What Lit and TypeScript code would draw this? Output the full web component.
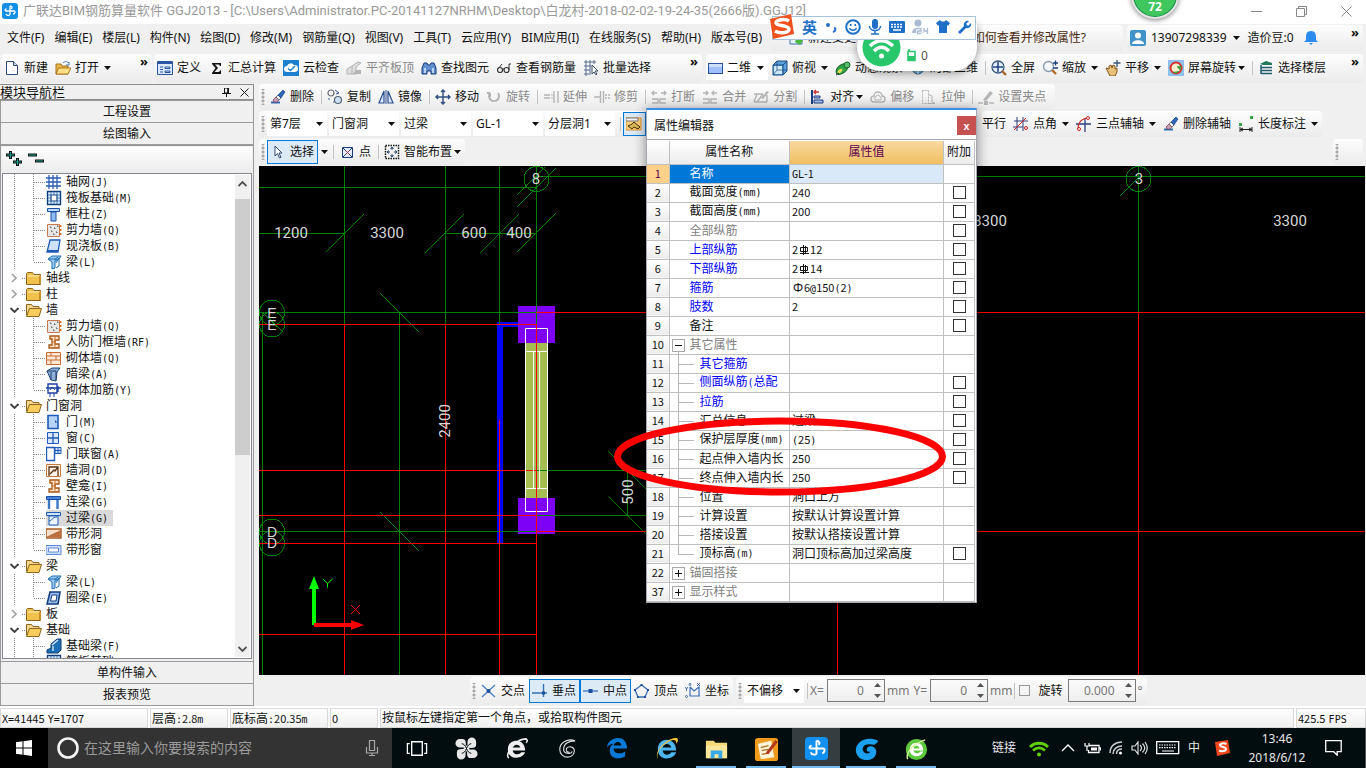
import { LitElement, html, css, svg, nothing } from "lit";
import { customElement } from "lit/decorators.js";
import { classMap } from "lit/directives/class-map.js";

const BLUE = "#1f4f99";
const GREY = "#b4b4b4";

const brush = svg`<path d="M1 13.5h9" stroke="#2f6fb0" stroke-width="2"/><path d="M3 11l3-3 3 3-2 2H4z" fill="#c9a0b8" stroke="#804060" stroke-width=".8"/><path d="M6 8l2-2 3 3-2 2z" fill="#eee" stroke="#555" stroke-width=".8"/><path d="M8 6l5-5 2 2-4 6z" fill="#2b66b8" stroke="#153d78" stroke-width=".6"/>`;
const beam = svg`<path d="M2 5l4-3h9l-2 3-4 2v7l-3 1V8z" fill="#9cc8ee" stroke="#1b6db5"/><path d="M3 5h8M8 6l4-3M10 9l3-5v8l-3 2" stroke="#1b6db5" fill="none"/>`;
const niche = svg`<path d="M4 2h9v4H9v4h4v4H3v-3h3V5H4z" fill="#ffe3c8" stroke="#a85510" stroke-width="1.3"/><path d="M9 2v12M6 8h4" stroke="#c87838"/>`;
const shear = svg`<path d="M1.500 2.500h12v12h-12z" fill="#e6e6e6" stroke="#c87850"/><path d="M4 5h1v1M8 6h1v1M5 9h1v1M10 10h1v1M7 12h1v1M11 4h1v1" stroke="#555" fill="none"/><path d="M14.500 3v11" stroke="#d87020" stroke-width="2" stroke-dasharray="2 2"/>`;

const ICONS: Record<string, unknown> = {
  file: svg`<path d="M2.500 1.500h7l4 4v9h-11z" fill="#fff" stroke="#2c4a78"/><path d="M9.500 1.500v4h4" fill="#cfdcf0" stroke="#2c4a78"/>`,
  open: svg`<path d="M1 4h5l1 2h6v8H1z" fill="#e8b84a" stroke="#a8741c"/><path d="M3.500 8H16l-3 6H1z" fill="#ffdf86" stroke="#a8741c"/><path d="M8 3c2-2 4-2 5 0l1-1v3h-3" fill="none" stroke="#4a78b0"/>`,
  define: svg`<path d="M.5 1.500h15v13H.5z" fill="#dce8fb" stroke="#2a55a5"/><path d="M.5 3h15" stroke="#2a55a5" stroke-width="2"/><path d="M3 7h3M3 9.500h3M3 12h3M8 7h5v1.500H8zM8 11h5v1.500H8z" stroke="#2a55a5" fill="none"/>`,
  sigma: svg`<path d="M4 3h9v3h-1l-1-1.500H7L10 8l-3.500 4H11l1-1.500h1V14H4v-1l3.500-5L4 4z" fill="#111"/>`,
  cloud: svg`<rect width="16" height="16" fill="#1d7fd0"/><path d="M4 12a3 3 0 010-6 4 4 0 017-1 3.500 3.500 0 011 7z" fill="#fff"/><path d="M5 8.500l2.500 2L12 6" fill="none" stroke="#1d7fd0" stroke-width="1.500"/>`,
  slab: svg`<path d="M1 9l5-3v8H1zM6 6l6-4 3 1-5 4v7H6" fill="#ddd" stroke="${GREY}"/><path d="M10 10h5v4H7z" fill="${GREY}"/>`,
  find: svg`<path d="M1 8l2-5h3l1 2h2l1-2h3l2 5v6h-5v-3H6v3H1z" fill="#5f8fd0" stroke="#173a78"/><path d="M4 8v5M12 8v5" stroke="#dcebff" stroke-width="1.500"/>`,
  glasses: svg`<circle cx="4" cy="10" r="2.500" fill="none" stroke="#333" stroke-width="1.200"/><circle cx="10.500" cy="10" r="2.500" fill="none" stroke="#333" stroke-width="1.200"/><path d="M6 9h2M2 9l4-5M13 10V4h2" fill="none" stroke="#333"/>`,
  batch: svg`<path d="M1 2h12M1 6h7M1 10h6M1 14h7M3 0v16M7 0v13M11 0v4" stroke="#5a6f90"/><path d="M9 5v9l2-2 2 3 1-1-2-3h3z" fill="#fff" stroke="#3a4a66"/>`,
  plane: svg`<rect x=".5" y="3.500" width="14" height="10" fill="#9fc0fa" stroke="#2a4fa0"/><path d="M1 4h13v3H1z" fill="#cfe0ff"/>`,
  cube: svg`<path d="M1 5l4-4h10v10l-4 4H1z" fill="#5aa0dc" stroke="#1d4a80"/><path d="M1 5h10v10M11 5l4-4" fill="none" stroke="#1d4a80"/><path d="M2 6h8v8H2z" fill="#cfe8f8"/><path d="M5 1v9h10M5 10l-4 5" stroke="#1d4a80" stroke-width=".7" fill="none"/>`,
  orbit: svg`<ellipse cx="7" cy="9" rx="7" ry="4" transform="rotate(-40 7 9)" fill="#2fa64a" stroke="#14602a"/><ellipse cx="5" cy="11" rx="3" ry="1.500" transform="rotate(-40 5 11)" fill="#eadb50"/><circle cx="12" cy="5" r="3" fill="#59c06c" stroke="#14602a"/><path d="M1 15l3-2" stroke="#333"/>`,
  local: svg`<circle cx="8" cy="8" r="6" fill="#68a8d8" stroke="#245a88"/><path d="M2 8h12M8 2v12" stroke="#fff"/>`,
  full: svg`<circle cx="7" cy="7" r="6" fill="#e8f2ff" stroke="#38557c" stroke-width="1.300"/><path d="M7 2v10M2 7h10" stroke="#1f3f80" stroke-width="1.500"/><path d="M11 11l4 4" stroke="#a8652a" stroke-width="2.400"/>`,
  zoomio: svg`<circle cx="6.500" cy="6.500" r="5" fill="#f4f8fd" stroke="#8898ac" stroke-width="1.300"/><path d="M10 10l4 4" stroke="#b06c2a" stroke-width="2.400"/><path d="M11 3h5M13.500.5v5M11 8h5" stroke="#1f3f80" stroke-width="1.300"/>`,
  hand: svg`<path d="M1 8l3 1V6l2-1 1 3 1-3 2 1v3l2-1v4l-2 4H5z" fill="#e8c078" stroke="#80541c"/><path d="M12 0v7M8.500 3h7" stroke="#38557c" stroke-width="1.300"/>`,
  spin: svg`<rect width="16" height="16" fill="#8fc0ea"/><circle cx="8" cy="8" r="5.500" fill="#f6f0d0" stroke="#d83030" stroke-width="2"/><path d="M5 12a4 4 0 006-1M9 7l4-1-1 4" fill="#40a040" stroke="#40a040"/>`,
  floors: svg`<path d="M2 4l6-3 6 2v2H5z" fill="#1f7a5c"/><path d="M3 7.500h11M3 10.500h11M3 13.500h11M3 5v9" stroke="#1f5c6c" stroke-width="1.500"/>`,
  brush,
  copy: svg`<circle cx="4" cy="4" r="3" fill="none" stroke="#667" stroke-width="1.200"/><circle cx="11" cy="11" r="3.500" fill="#cfe0f2" stroke="#567" stroke-width="1.200"/><path d="M8 1l4 3-3 1M2 9v2M6 13h1" stroke="#2a55a5" fill="none"/>`,
  mirror: svg`<path d="M6 2v12H1zM10 2v12h5z" fill="#dce8fb" stroke="#2a4f90" stroke-width="1.200"/><path d="M8 1v14" stroke="#2a4f90"/>`,
  move: svg`<path d="M8 1v14M1 8h14M6 3l2-2 2 2M6 13l2 2 2-2M3 6L1 8l2 2M13 6l2 2-2 2" fill="none" stroke="#2f4f80" stroke-width="1.400"/>`,
  rotate: svg`<path d="M4 4a5 5 0 108 0M4 4v4M4 4H1" fill="none" stroke="${GREY}" stroke-width="2"/>`,
  extend: svg`<path d="M1 6h6M1 9h6M11 2v12M15 2v12" stroke="${GREY}" stroke-width="1.400"/><path d="M8 6h2M8 9h2" stroke="${GREY}"/>`,
  trim: svg`<path d="M0 8h6M6.500 2v12M9.500 2v12M11 6h2M14 6h2M11 9h2M14 9h2" stroke="${GREY}" stroke-width="1.400"/>`,
  breakit: svg`<path d="M1 4h5M10 4h5M3 2L1 4l2 2M13 2l2 2-2 2M1 10h6v4H1M15 10H9v4h6" fill="none" stroke="${GREY}" stroke-width="1.400"/>`,
  merge: svg`<path d="M1 4h5M10 4h5M4 2l2 2-2 2M12 2l-2 2 2 2M1 10h6v4H1M15 10H9v4h6" fill="none" stroke="${GREY}" stroke-width="1.400"/>`,
  split: svg`<path d="M1 5h9M1 13h13M10 5L4 13M4 5l-3 8M14 6v7" fill="none" stroke="${GREY}" stroke-width="1.400"/><path d="M8 9l6-7 2 1-6 7z" fill="${GREY}"/>`,
  align: svg`<path d="M2 1v14" stroke="#1c3f80" stroke-width="2"/><path d="M4 3h5M6 1L4 3l2 2" fill="none" stroke="#d03030" stroke-width="1.300"/><path d="M4 7h6v2H4zM4 11h9v3H4z" fill="#a8c4f0" stroke="#1c3f80"/>`,
  offset: svg`<path d="M4 13a3 3 0 010-6 4 4 0 018 0 3 3 0 010 6z" fill="none" stroke="${GREY}" stroke-width="1.400"/><path d="M6 11a1.500 1.500 0 010-3 2 2 0 014 0 1.500 1.500 0 010 3z" fill="none" stroke="${GREY}"/>`,
  stretch: svg`<path d="M1.500 1.500h6v13h-6z" fill="none" stroke="${GREY}" stroke-dasharray="2 1"/><path d="M7 5l4 2v6l3 1.500H7" fill="none" stroke="${GREY}"/>`,
  grip: svg`<path d="M5 11l7-9 3 2-7 8z" fill="${GREY}"/><path d="M0 14h5M11 14h5" stroke="${GREY}" stroke-width="1.500"/><path d="M6 12h4v4H6z" fill="${GREY}"/>`,
  cursor: svg`<path d="M5 2v10l2.500-2.500 2 4.500 1.500-.7-2-4.300H12z" fill="#fff" stroke="#334a70"/>`,
  point: svg`<path d="M3.500 3.500h10v10h-10z" fill="#e4ecf8" stroke="#1f3a78"/><path d="M4 4l9 9M13 4l-9 9" stroke="#1f3a78"/><path d="M6.500 6.500l4 4M10.500 6.500l-4 4" stroke="#a03050"/>`,
  smart: svg`<path d="M1.500 1.500h13v13h-13z" fill="none" stroke="#111" stroke-width="1.500" stroke-dasharray="1.500 1"/><path d="M8 3v3M8 10v3M3 8h3M10 8h3M6.500 5L8 3l1.500 2M6.500 11L8 13l1.500-2M5 6.500L3 8l2 1.500M11 6.500L13 8l-2 1.500" stroke="#1f3f80" fill="none"/>`,
  prop: svg`<path d="M0 2h15v12H0z" fill="#ffd27a" stroke="#e09030"/><path d="M0 2h12v3H0z" fill="#f6f6f6" stroke="#777"/><path d="M2 10l4-2 2-2 6 5-2 2-4-2-2 2z" fill="#d8b850" stroke="#4a3010"/>`,
  angle: svg`<path d="M1 5h14M4 1v14M10 1v14M0 11h10" stroke="#2a3f80"/><path d="M1 14l12-12" stroke="#d02020"/><circle cx="13" cy="12" r="1.500" fill="none" stroke="#d02020"/>`,
  axis3: svg`<path d="M0 8h15M9 3v13" stroke="#2a3f80" stroke-width="1.300"/><path d="M2 13C2 6 6 2 13 2" fill="none" stroke="#d02020" stroke-width="1.200"/><circle cx="3" cy="13" r="1.500" fill="#fff" stroke="#d02020"/><circle cx="12" cy="2" r="1.500" fill="#fff" stroke="#d02020"/>`,
  dim: svg`<path d="M1 7h3v3H1zM12 0h3v3h-3z" fill="#2fa64a"/><path d="M2 11v5M14 11v5M2 13.500h12M5 12l-3 1.500L5 15M11 12l3 1.500-3 1.500" stroke="#222" fill="none"/>`,
  cross: svg`<path d="M1 2l13 12M14 2L1 14" stroke="#4a80c0" stroke-width="1.300"/><circle cx="7.500" cy="8" r="2" fill="${BLUE}"/>`,
  perp: svg`<path d="M0 10h15M11.500 1v13" stroke="#3a70b8" stroke-width="1.400"/><path d="M10 8.500h3v3h-3z" fill="${BLUE}"/>`,
  mid: svg`<path d="M0 8h15" stroke="#3a70b8" stroke-width="1.300"/><path d="M5.500 6h4v4h-4z" fill="${BLUE}"/>`,
  penta: svg`<path d="M7.500 2L14 7l-3 7H4L1 7z" fill="none" stroke="#3a70b8" stroke-width="1.300"/><path d="M6.500 1h2v2h-2zM13 6h2v2h-2zM10 13h2v2h-2zM3 13h2v2H3zM0 6h2v2H0z" fill="${BLUE}"/>`,
  coord: svg`<path d="M5 4v9h10M5 4l4 4 5-4v9" fill="none" stroke="#3a70b8" stroke-width="1.200"/><path d="M0 4l1.500 2L3 4M1.500 6v2M12 0l3 3M15 0l-3 3" fill="none" stroke="${BLUE}" stroke-width=".8"/><circle cx="5" cy="1.500" r="1" fill="none" stroke="${BLUE}" stroke-width=".8"/><circle cx="1.500" cy="13.500" r="1" fill="none" stroke="${BLUE}" stroke-width=".8"/>`,
  user: svg`<rect width="16" height="16" rx="2" fill="#3f93c8"/><circle cx="8" cy="5.500" r="3" fill="#fff"/><path d="M2 14c0-5 12-5 12 0z" fill="#fff"/>`,
  bell: svg`<path d="M8 1c4 0 5 3 5 6v3l2 2H1l2-2V7c0-3 1-6 5-6z" fill="#2a8cf0"/><path d="M6 13h4l-2 2z" fill="#2a8cf0"/>`,
  neu: svg`<path d="M2 4h12v10H2z" fill="#e8f2ff" stroke="#3a70b8"/><path d="M9 6l6 4-3 5-5-3z" fill="#49b83c"/>`,
  folder: svg`<path d="M.5 3.500l1-1h5l1.500 2h6.500v10H.5z" fill="#f2c14c" stroke="#8a6420"/><path d="M1.500 6h12" stroke="#fff0b8"/><path d="M13 6v8h2V5z" fill="#c88f2a"/>`,
  folderOpen: svg`<path d="M.5 13V2.500h5l1.500 2h6V7" fill="#f6d98a" stroke="#8a6420"/><path d="M3.500 6.500H15.500l-2.500 8H.5z" fill="#f8cd5c" stroke="#8a6420"/>`,
  grid: svg`<path d="M0 4h13M0 8h13M0 12h13M3 1v14M7 1v14M11 1v14" stroke="#2c5cb0" stroke-width="1.300"/><circle cx="14" cy="4" r="1" fill="#2c5cb0"/><circle cx="14" cy="8" r="1" fill="#2c5cb0"/><circle cx="14" cy="12" r="1" fill="#2c5cb0"/>`,
  raft: svg`<path d="M1.500 1.500h13v13h-13z" fill="#e4f0fc" stroke="#123f7c" stroke-width="1.400"/><path d="M5 5h6v6H5z" fill="#fff" stroke="#123f7c" stroke-width="1.200"/><path d="M2 5h3M2 8h3M2 11h3M11 5h3M11 8h3M11 11h3M5 2v3M8 2v3M11 2v3M5 11v3M8 11v3M11 11v3" stroke="#3f78b8"/>`,
  column: svg`<path d="M1.500 2.500h12v3h-12z" fill="#bcd8fa" stroke="#1b4fa5"/><path d="M5 6h5v9H5z" fill="#8fbaf2" stroke="#1b4fa5"/>`,
  shear,
  plate: svg`<path d="M4 2h10l-2 12H1z" fill="#cfe2fb" stroke="#1f5ab8" stroke-width="1.300"/><path d="M2 13h10" stroke="#1f5ab8" stroke-width="2"/>`,
  beam,
  niche,
  brick: svg`<path d="M.5 2.500h14v12H.5z" fill="#ffe8d6" stroke="#c86a30"/><path d="M.5 6h14M.5 10h14M5 2v4M10 6v4M5 10v4" stroke="#c86a30"/>`,
  hidden: svg`<path d="M1 5l5-3h8l-3 4-1 9-5-1z" fill="#8fb0d8" stroke="#1c3f70"/><path d="M1 5h9v9M5 6v8" stroke="#1c3f70" fill="none"/>`,
  rebar: svg`<path d="M2 2h9v9H2zM0 6h15M12 4v6" fill="none" stroke="#1c3fa5" stroke-width="1.400"/><path d="M4 11v4M8 11v4M4 8l2-3 3 3" stroke="#1c3fa5" fill="none"/>`,
  door: svg`<path d="M2 1.500h10v13H2z" fill="#b9d4fa" stroke="#1f5ab8" stroke-width="1.600"/><path d="M9 7h1v2" stroke="#1f5ab8"/>`,
  window: svg`<path d="M1.500 2.500h11v11h-11z" fill="#dceafd" stroke="#1f5ab8"/><path d="M7 2v12M1 8h12" stroke="#1f5ab8" stroke-width="1.300"/>`,
  doorwin: svg`<path d="M.5 1.500h8v13h-8z" fill="#fff" stroke="#1f5ab8" stroke-width="1.400"/><path d="M9 1.500h6v6H9zM12 1v6M9 4.500h6" fill="#cfe0fb" stroke="#1f5ab8"/>`,
  hole: svg`<path d="M.5 2.500h14v12H.5z" fill="#fff4ea" stroke="#c8783c"/><path d="M3 14V5h9v9M4 12l4-4 1 1 3-4" fill="none" stroke="#5a3010" stroke-width="1.300"/>`,
  link: svg`<path d="M.5 2.500h14v3H.5z" fill="#4a86d8" stroke="#1b4fa5"/><path d="M3 6v9M11.500 6v9" stroke="#3b76c8" stroke-width="2.400"/>`,
  lintel: svg`<path d="M.5 2.500h14v3H.5z" fill="#cfe0fb" stroke="#1f5ab8"/><path d="M3 6h9v9H3z" fill="#eef5ff" stroke="#1f5ab8"/><path d="M3 11c3 0 3-4 8-4" stroke="#1f5ab8" fill="none"/>`,
  striphole: svg`<path d="M0 3h15v9H0z" fill="#f6e0cc" stroke="#a85a20" stroke-width="1.400"/><path d="M0 11L15 4v7z" fill="#b87040"/>`,
  stripwin: svg`<path d="M0 3.500h15v9H0z" fill="#cfe0fb" stroke="#5a8ad8"/><path d="M2.500 6h10v4h-10z" fill="#fff" stroke="#5a8ad8"/>`,
  ring: svg`<path d="M4 2h10l-2 12H1z" fill="#9cbdf0" stroke="#123f7c" stroke-width="1.600"/><path d="M6 5h5l-1 6H4.500z" fill="#fff" stroke="#123f7c"/>`,
  fbeam: svg`<path d="M1 12l4-2V6l6-5h4v11l-3 3H1z" fill="#1d6fb5" stroke="#0f3f70"/><path d="M6 7l6-5M7 8v5" stroke="#dcebfb" stroke-width="1.300"/>`,
};

const icon = (name: string) => html`<svg class="ic" viewBox="0 0 16 16" aria-hidden="true">${ICONS[name]}</svg>`;
const arrow = html`<svg class="arrow" viewBox="0 0 8 4" aria-hidden="true"><path d="M1 0h7L4.500 4z" fill="#111"/></svg>`;
const more = html`<button class="more" aria-label="更多">»</button>`;

/** Narrow Latin letters and digits inside bitmap-style Chinese labels. */
const half = (text: string) =>
  text.split(/([0-9.\-]+|[A-Za-z()@=:]+)/).map((part) =>
    /^[0-9.\-]+$/.test(part)
      ? html`<span class="num">${part}</span>`
      : /^[A-Za-z()@=:]+$/.test(part)
        ? html`<span class="lat">${part}</span>`
        : part,
  );

const shared = css`
  * { box-sizing: border-box; }
  button, select, input { font: inherit; color: inherit; margin: 0; padding: 0; border: 0; background: none; border-radius: 0; }
  .ic { width: 16px; height: 16px; flex: none; display: block; }
  .arrow { width: 8px; height: 4px; flex: none; }
  .num { font-family: "Noto Sans CJK SC", sans-serif; font-size: 11px; }
  .lat { font-family: "DejaVu Sans Mono", monospace; font-size: 10px; }
`;

type Tool = { i?: string; t?: string; drop?: boolean; tight?: boolean; off?: boolean; on?: boolean; sep?: boolean };
const SEP: Tool = { sep: true };

@customElement("tool-items")
class ToolItems extends LitElement {
  static properties = { items: { attribute: false } };
  declare items: Tool[];
  static styles = [shared, css`
    :host { display: flex; align-items: center; height: 100%; }
    .btn { display: flex; align-items: center; gap: 4px; height: 24px; padding: 0 4px 0 3px; white-space: nowrap; }
    .off { color: #8a8a8a; }
    .on { background: #dceaf6; box-shadow: inset 0 0 0 1px #0078d7; }
    .tight .arrow { margin-left: -3px; }
    .split { display: flex; width: 12px; padding-left: 2px; align-items: center; height: 24px; }
    .sep { width: 6px; height: 14px; display: flex; justify-content: center; }
    .sep::before { content: ""; width: 1px; background: #c4c4c4; }
  `];
  render() {
    return this.items.map((it) => it.sep
      ? html`<span class="sep"></span>`
      : html`<button class=${classMap({ btn: true, off: !!it.off, on: !!it.on, tight: !!it.tight })} ?disabled=${!!it.off} aria-label=${it.t ? nothing : "属性"}>
          ${icon(it.i!)}${it.t ?? nothing}${it.drop && !it.on ? arrow : nothing}</button>
        ${it.drop && it.on ? html`<button class="split" aria-label="展开">${arrow}</button>` : nothing}`);
  }
}

const MENUS = ["文件(F)", "编辑(E)", "楼层(L)", "构件(N)", "绘图(D)", "修改(M)", "钢筋量(Q)", "视图(V)", "工具(T)", "云应用(Y)", "BIM应用(I)", "在线服务(S)", "帮助(H)", "版本号(B)"];
const T_FILE: Tool[] = [{ i: "file", t: "新建" }, { i: "open", t: "打开", drop: true }];
const T_MAIN: Tool[] = [{ i: "define", t: "定义" }, { i: "sigma", t: "汇总计算" }, { i: "cloud", t: "云检查" }, { i: "slab", t: "平齐板顶", off: true }, { i: "find", t: "查找图元" }, { i: "glasses", t: "查看钢筋量" }, { i: "batch", t: "批量选择" }];
const T_VIEW: Tool[] = [{ i: "cube", t: "俯视", drop: true }, { i: "orbit", t: "动态观察" }, { i: "local", t: "局部三维" }, SEP, { i: "full", t: "全屏" }, { i: "zoomio", t: "缩放", drop: true }, { i: "hand", t: "平移", drop: true }, { i: "spin", t: "屏幕旋转", drop: true, tight: true }, SEP, { i: "floors", t: "选择楼层" }];
const T_EDIT: Tool[] = [{ i: "brush", t: "删除" }, SEP, { i: "copy", t: "复制" }, { i: "mirror", t: "镜像" }, SEP, { i: "move", t: "移动" }, { i: "rotate", t: "旋转", off: true }, SEP, { i: "extend", t: "延伸", off: true }, { i: "trim", t: "修剪", off: true }, SEP, { i: "breakit", t: "打断", off: true }, { i: "merge", t: "合并", off: true }, { i: "split", t: "分割", off: true }, SEP, { i: "align", t: "对齐", drop: true, tight: true }, { i: "offset", t: "偏移", off: true }, { i: "stretch", t: "拉伸", off: true }, SEP, { i: "grip", t: "设置夹点", off: true }];
const T_AXIS: Tool[] = [{ i: "angle", t: "点角", drop: true }, { i: "axis3", t: "三点辅轴", drop: true }, { i: "brush", t: "删除辅轴" }, { i: "dim", t: "长度标注", drop: true }];
const T_DRAW: Tool[] = [{ i: "cursor", t: "选择", on: true, drop: true }, SEP, { i: "point", t: "点" }, SEP, { i: "smart", t: "智能布置", drop: true, tight: true }];
const T_SNAP: Tool[] = [{ i: "cross", t: "交点" }, { i: "perp", t: "垂点", on: true }, { i: "mid", t: "中点", on: true }, { i: "penta", t: "顶点" }, { i: "coord", t: "坐标" }];

type Node = { t: string; i: string; folder?: boolean; open?: boolean; last?: boolean; sel?: boolean };
const TREE: Node[] = [
  { t: "轴网(J)", i: "grid" }, { t: "筏板基础(M)", i: "raft" }, { t: "框柱(Z)", i: "column" }, { t: "剪力墙(Q)", i: "shear" }, { t: "现浇板(B)", i: "plate" }, { t: "梁(L)", i: "beam", last: true },
  { t: "轴线", i: "folder", folder: true }, { t: "柱", i: "folder", folder: true }, { t: "墙", i: "folderOpen", folder: true, open: true },
  { t: "剪力墙(Q)", i: "shear" }, { t: "人防门框墙(RF)", i: "niche" }, { t: "砌体墙(Q)", i: "brick" }, { t: "暗梁(A)", i: "hidden" }, { t: "砌体加筋(Y)", i: "rebar", last: true },
  { t: "门窗洞", i: "folderOpen", folder: true, open: true },
  { t: "门(M)", i: "door" }, { t: "窗(C)", i: "window" }, { t: "门联窗(A)", i: "doorwin" }, { t: "墙洞(D)", i: "hole" }, { t: "壁龛(I)", i: "niche" }, { t: "连梁(G)", i: "link" }, { t: "过梁(G)", i: "lintel", sel: true }, { t: "带形洞", i: "striphole" }, { t: "带形窗", i: "stripwin", last: true },
  { t: "梁", i: "folderOpen", folder: true, open: true }, { t: "梁(L)", i: "beam" }, { t: "圈梁(E)", i: "ring", last: true },
  { t: "板", i: "folder", folder: true }, { t: "基础", i: "folderOpen", folder: true, open: true }, { t: "基础梁(F)", i: "fbeam" }, { t: "筏板基础(M)", i: "raft" },
];

@customElement("module-nav")
class ModuleNav extends LitElement {
  static styles = [shared, css`
    :host { display: flex; flex-direction: column; height: 100%; font-size: 12px; line-height: 16px; }
    .head { display: flex; align-items: center; height: 16px; border: 1px solid #8c8c8c; border-left: 0; font-size: 13px; margin-bottom: 1px; flex: none; }
    .head span { flex: 1; }
    .head button { width: 18px; height: 12px; display: flex; justify-content: center; align-items: center; }
    .acc { height: 23px; margin-top: -1px; flex: none; border: 1px solid #9a9a9a; background: #f0f0f0; text-align: center; width: 100%; }
    .box { flex: 1; min-height: 0; display: flex; flex-direction: column; border: 1px solid #9a9a9a; padding: 1px 1px 0; background: #f0f0f0; }
    .strip { height: 26px; flex: none; display: flex; align-items: center; gap: 6px; padding-left: 4px; background: linear-gradient(#fdfdfd, #ececec); }
    .tree { flex: 1; min-height: 0; display: flex; background: #fff; border: 1px solid #828790; margin-bottom: 2px; }
    ul { flex: 1; margin: 0; padding: 0; list-style: none; overflow: hidden; }
    li { display: flex; height: 16px; align-items: center; }
    .guide { width: 43px; height: 16px; flex: none; }
    .guide.f { width: 23px; }
    .node { display: flex; align-items: center; height: 16px; gap: 4px; padding: 0 5px 0 0; white-space: nowrap; }
    .sel { background: #d9d9d9; }
    .bar { width: 15px; margin: 1px 1px; background: #f0f0f0; display: flex; flex-direction: column; align-items: center; justify-content: space-between; }
    .bar button { width: 15px; height: 17px; display: flex; align-items: center; justify-content: center; flex: none; }
    .track { flex: 1; width: 15px; padding-top: 7px; }
    .thumb { height: 58%; background: #cdcdcd; }
  `];
  render() {
    return html`
      <div class="head"><span>模块导航栏</span>
        <button aria-label="固定"><svg width="9" height="9" viewBox="0 0 9 9"><path d="M2.500 0v5h4V0zM0 5.500h9M4.500 5.500V9M5.700 0v5" stroke="#111" fill="none"/></svg></button>
        <button aria-label="关闭"><svg width="9" height="9" viewBox="0 0 9 9"><path d="M.5.5l8 8M8.500.5l-8 8" stroke="#222"/></svg></button></div>
      <button class="acc">工程设置</button><button class="acc">绘图输入</button>
      <div class="box">
        <div class="strip">
          <button aria-label="全部展开"><svg width="16" height="16" viewBox="0 0 16 16"><path d="M0 5h9M4.500 1v8M7 12h9M11.500 8v8" stroke="#111" stroke-width="3"/><path d="M1 5h7M4.500 2v6M8 12h7M11.500 9v6" stroke="#18a090" stroke-width="1"/></svg></button>
          <button aria-label="全部折叠"><svg width="16" height="16" viewBox="0 0 16 16"><path d="M0 5h9M7 11h9" stroke="#111" stroke-width="3"/><path d="M1 5h7M8 11h7" stroke="#18a090"/></svg></button>
        </div>
        <div class="tree">
          <ul>${TREE.map((n) => html`<li>
            ${n.folder
              ? html`<svg class="guide f" viewBox="0 0 23 16">${n.open ? svg`<path d="M7.500 6l4 4 4-4" fill="none" stroke="#404040" stroke-width="1.800"/>` : svg`<path d="M9 4l4 4-4 4" fill="none" stroke="#a0a0a0" stroke-width="1.600"/>`}<path d="M19 8.500h4" stroke="#888" stroke-dasharray="1 1"/></svg>`
              : html`<svg class="guide" viewBox="0 0 43 16"><path d="M11.500 0v16M30.500 0v${n.last ? 8 : 16}M31 8.500h11" fill="none" stroke="#888" stroke-dasharray="1 1"/></svg>`}
            <button class=${classMap({ node: true, sel: !!n.sel })}>${icon(n.i)}<span>${half(n.t)}</span></button></li>`)}</ul>
          <div class="bar">
            <button aria-label="向上"><svg width="9" height="6" viewBox="0 0 9 6"><path d="M.5 5l4-4 4 4" fill="none" stroke="#505050" stroke-width="1.800"/></svg></button>
            <div class="track"><div class="thumb"></div></div>
            <button aria-label="向下"><svg width="9" height="6" viewBox="0 0 9 6"><path d="M.5 1l4 4 4-4" fill="none" stroke="#505050" stroke-width="1.800"/></svg></button>
          </div>
        </div>
      </div>
      <button class="acc">单构件输入</button><button class="acc">报表预览</button>`;
  }
}

@customElement("plan-canvas")
class PlanCanvas extends LitElement {
  static styles = css`
    :host { display: block; background: #000; overflow: hidden; }
    svg { display: block; width: 100%; height: 100%; }
    .g { stroke: #008000; fill: none; } .r { stroke: #f00; fill: none; } .w { stroke: #fff; fill: none; }
    .d { stroke: #008000; fill: none; shape-rendering: crispEdges; }
    text { font: 15px Roboto, sans-serif; fill: #d8d8d8; text-anchor: middle; }
    .axis { font-family: "Liberation Sans Narrow", "Liberation Sans", sans-serif; font-size: 14px; }
  `;
  render() {
    return html`<svg role="img" aria-label="绘图区"><g transform="translate(-259 -166)">
      <rect x="497" y="322" width="6" height="222" fill="#0000f8"/><rect x="497" y="322" width="22" height="5" fill="#0000f8"/>
      <rect x="518" y="306" width="37" height="37" fill="#7d00f7"/><rect x="518" y="498" width="37" height="36" fill="#7d00f7"/>
      <rect x="525" y="343" width="23" height="155" fill="#a5be52"/>
      <path class="g" d="M344.500 166v158M445.500 166v158M499.500 166v158M536.500 166v158M399.500 312v363M262.500 312v363M259 187.500h277M259 233.500h85M445 233.500h91M536 176.500h829M259 312.500h277M536 470.500h110M536 515.500h110M259 531.500h277M627.500 470v45M1138.500 166v146"/>
      <path class="d" d="M326 252l38-38M425 253l39-39M480 253l39-39M517 252l39-39M517 207l39-39M517 195l28-28M380 293l39 39M380 512l39 39M262 312l21 20M608 451l39 39M609 497l39 39M1120 196l18-18"/>
      <g class="d"><circle cx="536.500" cy="179" r="12.500"/><circle cx="272" cy="312.500" r="12.500"/><circle cx="272" cy="324.500" r="12.500"/><circle cx="272" cy="531.500" r="12.500"/><circle cx="272" cy="543.500" r="12.500"/><circle cx="1138.500" cy="179" r="12.500"/></g>
      <path class="r" d="M344.500 324v351M445.500 324v351M499.500 420v255M259 324.500h277M259 470.500h277M259 515.500h277M259 543.500h277M259 634.500h277M536 312.500h829M536 531.500h829M837.500 312v363M1138.500 312v363"/>
      <path class="w" d="M525.500 328.500h22v183h-22zM525 351.500h22M525 488.500h22M533.500 351v137M539.500 351v137"/>
      <path class="r" d="M536.500 324v351"/>
      <path d="M312 625v-36h-3l5-13 5 13h-3v36z" fill="#0f0"/><path d="M314 623h37v-3l13 5-13 5v-3h-37z" fill="#f00"/>
      <text x="291" y="238">1200</text><text x="387" y="238">3300</text><text x="474" y="238">600</text><text x="519" y="238">400</text>
      <text x="536" y="184">8</text><text x="1139" y="184">3</text><text x="990" y="226">3300</text><text x="1290" y="226">3300</text>
      <text class="axis" x="272" y="318">E</text><text class="axis" x="272" y="330">E</text><text class="axis" x="272" y="537">D</text><text class="axis" x="272" y="548">D</text>
      <text transform="translate(450 421) rotate(-90)">2400</text><text transform="translate(633 492) rotate(-90)">500</text>
      <path d="M323 579l4.500 4.500 5-4.500M327.500 583v4.500" stroke="#0f0" fill="none"/><path d="M351 605l9 9M360 605l-9 9" stroke="#f00"/>
    </g></svg>`;
  }
}

type Row = { n: number; t: string; v?: string; c?: "grey" | "blue"; box?: boolean; sub?: boolean; end?: boolean; exp?: "+" | "-" };
const ROWS: Row[] = [
  { n: 1, t: "名称", v: "GL-1" },
  { n: 2, t: "截面宽度(mm)", v: "240", box: true }, { n: 3, t: "截面高度(mm)", v: "200", box: true },
  { n: 4, t: "全部纵筋", c: "grey", box: true },
  { n: 5, t: "上部纵筋", v: "2#12", c: "blue", box: true }, { n: 6, t: "下部纵筋", v: "2#14", c: "blue", box: true },
  { n: 7, t: "箍筋", v: "Φ6@150(2)", c: "blue", box: true }, { n: 8, t: "肢数", v: "2", c: "blue", box: true },
  { n: 9, t: "备注", box: true }, { n: 10, t: "其它属性", c: "grey", exp: "-" },
  { n: 11, t: "其它箍筋", c: "blue", sub: true }, { n: 12, t: "侧面纵筋(总配", c: "blue", sub: true, box: true },
  { n: 13, t: "拉筋", c: "blue", sub: true, box: true }, { n: 14, t: "汇总信息", v: "过梁", sub: true, box: true },
  { n: 15, t: "保护层厚度(mm)", v: "(25)", sub: true, box: true }, { n: 16, t: "起点伸入墙内长", v: "250", sub: true, box: true },
  { n: 17, t: "终点伸入墙内长", v: "250", sub: true, box: true }, { n: 18, t: "位置", v: "洞口上方", sub: true },
  { n: 19, t: "计算设置", v: "按默认计算设置计算", sub: true }, { n: 20, t: "搭接设置", v: "按默认搭接设置计算", sub: true },
  { n: 21, t: "顶标高(m)", v: "洞口顶标高加过梁高度", sub: true, end: true, box: true },
  { n: 22, t: "锚固搭接", c: "grey", exp: "+" }, { n: 37, t: "显示样式", c: "grey", exp: "+" },
];
const rebar = html`<svg class="rb" viewBox="0 0 12 12" aria-label="三级钢"><path d="M2.500 3.500h7v4h-7zM5.500 1v10M7.500 2v8M2 9.500h9" fill="none" stroke="#111"/></svg>`;

@customElement("property-editor")
class PropertyEditor extends LitElement {
  static styles = [shared, css`
    :host { display: block; background: #fff; border: 1px solid #a8a8b0; border-top: 2px solid #3a8ee6; box-shadow: 0 2px 12px rgba(0, 0, 0, .45); font-size: 12px; line-height: 16px; }
    header { display: flex; align-items: center; justify-content: space-between; height: 30px; padding: 2px 0 0 7px; border-bottom: 1px solid #a8a8b0; margin-bottom: 1px; }
    h2 { font-size: 12px; font-weight: 400; margin: 0; }
    header button { width: 19px; height: 19px; background: #c75050; color: #fff; font: bold 11px/16px "Liberation Sans", sans-serif; }
    table { border-collapse: collapse; table-layout: fixed; width: calc(100% - 1px); }
    th, td { border: 1px solid #c0c0c0; padding: 0; height: 19px; overflow: hidden; white-space: nowrap; font-weight: 400; }
    thead th { height: 23px; background: linear-gradient(#fff, #ececec); border-top: 0; }
    th:first-child { border-left: 0; }
    .c1 { width: 22px; } .c3 { width: 154px; } .c4 { width: 31px; }
    thead .val { background: linear-gradient(#f9d99f, #f0be62); color: #600050; }
    tbody th { background: linear-gradient(#fff, #ececec); text-align: center; }
    .cell { display: flex; align-items: center; height: 18px; }
    .pad { width: 20px; flex: none; height: 18px; }
    .sub .pad { width: 30px; }
    .grey { color: #808080; } .blue { color: #00f; }
    .v { padding-left: 2px; }
    .rb { width: 12px; height: 12px; }
    .phi { width: 12px; text-align: center; }
    .ck { text-align: center; line-height: 0; }
    input { appearance: none; width: 13px; height: 13px; border: 1px solid #333; background: #fff; vertical-align: middle; }
    .cur th { background: #ffd08a; color: #600050; } .cur .name { background: #0078d7; color: #fff; } .cur .v { background: #d9e9f8; }
  `];
  private value(v: string) {
    return v.split(/([#Φ])/).map((p) => p === "#" ? rebar : p === "Φ" ? html`<span class="phi">Φ</span>` : html`<span>${half(p)}</span>`);
  }
  private guide(r: Row) {
    if (r.exp) return svg`<rect x="2.500" y="3.500" width="12" height="12" fill="#fff" stroke="#a8a8a8"/><path d="M5 9.500h7${r.exp === "+" ? "M8.500 6v7" : ""}" stroke="#111"/>${r.exp === "-" ? svg`<path d="M8.500 16v2" stroke="#b8b8b8"/>` : nothing}`;
    if (r.sub) return svg`<path d="M8.500 0v${r.end ? 9 : 18}M8 9.500h16" fill="none" stroke="#b8b8b8"/>`;
    return nothing;
  }
  render() {
    return html`<header><h2>属性编辑器</h2><button aria-label="关闭">x</button></header>
      <table><colgroup><col class="c1"><col><col class="c3"><col class="c4"></colgroup>
        <thead><tr><th></th><th>属性名称</th><th class="val">属性值</th><th>附加</th></tr></thead>
        <tbody>${ROWS.map((r) => html`<tr class=${classMap({ cur: r.n === 1, sub: !!r.sub })}>
          <th scope="row">${half(String(r.n))}</th>
          <td class="name ${r.c ?? ""}"><div class="cell"><svg class="pad">${this.guide(r)}</svg><span>${half(r.t)}</span></div></td>
          <td class="v"><div class="cell">${r.v ? this.value(r.v) : nothing}</div></td>
          <td class="ck">${r.box ? html`<input type="checkbox" aria-label="附加 ${r.t}">` : nothing}</td></tr>`)}</tbody>
      </table>`;
  }
}

@customElement("task-bar")
class TaskBar extends LitElement {
  static styles = [shared, css`
    :host { display: flex; height: 40px; background: #020d10; color: #e8e8e8; font-size: 12px; line-height: 16px; }
    .start { width: 48px; background: #000; display: grid; place-items: center; flex: none; }
    .search { width: 344px; background: #333; display: flex; align-items: center; padding: 0 13px 0 8px; gap: 4px; flex: none; }
    .search input { flex: 1; min-width: 0; font-size: 14px; outline: none; }
    .search input::placeholder { color: #9a9a9a; opacity: 1; }
    .app { width: 48px; display: grid; place-items: center; border-bottom: 2px solid transparent; padding-top: 2px; margin-right: 2px; }
    .run { background: linear-gradient(#76b9ed, #76b9ed) bottom / 40px 2px no-repeat; border: 0; }
    .act { background: #343d40; border-bottom-color: #76b9ed; }
    .app svg { width: 25px; height: 25px; }
    .apps { display: flex; }
    .tray { margin-left: auto; display: flex; align-items: center; gap: 8px; }
    .tray button { display: grid; place-items: center; }
    .clock { width: 62px; text-align: center; line-height: 19px; }
    .note { width: 50px; padding-right: 15px; height: 40px; border-right: 1px solid #555; }
  `];
  render() {
    const apps: [string, string, unknown][] = [
      ["任务视图", "", svg`<path d="M8 6h11v14H8z" fill="none" stroke="#fff" stroke-width="1.400"/><path d="M6 8H3.500v10H6M21 8h2.500v10H21" fill="none" stroke="#fff" stroke-width="1.300"/>`],
      ["风扇", "", svg`<g fill="#e8e8e8"><path d="M12 12H6a4 4 0 010-9h3c3 0 4 3 3 9zM14 12V6a4 4 0 019 0v3c0 3-3 4-9 3zM14 14h6a4 4 0 010 9h-3c-3 0-4-3-3-9zM12 14v6a4 4 0 01-9 0v-3c0-3 3-4 9-3z"/><circle cx="13" cy="13" r="3"/></g><path d="M8 8c2 0 4 2 5 5 1-3 3-5 5-5M8 18c2 0 4-2 5-5 1 3 3 5 5 5" stroke="#020d10" fill="none"/>`],
      ["浏览器", "", svg`<path d="M4 14C4 8 8 5 13 5s9 4 9 10H9c1 5 7 5 9 2h4c-3 8-18 8-18-3zm5-2h8c-1-4-7-4-8 0z" fill="#eee"/><path d="M5 23c-5-4 7-20 18-20 2 1 1 3 0 4" fill="none" stroke="#eee" stroke-width="1.600"/>`],
      ["广联达", "", svg`<path d="M22 5C14 2 6 7 6 14c0 5 4 8 8 8 5 0 8-4 7-8-1-3-6-4-8-1-1 3 1 4 3 4M22 5c-7 0-12 3-12 9 0 4 7 6 9 2" fill="none" stroke="#ddd" stroke-width="1.200"/>`],
      ["Edge", "", svg`<path d="M3 12C4 4 11 2 15 2c6 0 9 5 9 11H10c0 6 8 6 12 3v5c-6 4-16 3-16-6 0-4 2-6 4-7-3 0-6 2-7 4zm7-2h8c0-5-7-5-8 0z" fill="#0a78d6"/>`],
      ["Internet Explorer", "", svg`<path d="M4 14C4 8 8 4 13 4s10 4 10 11H9c1 6 7 5 9 2h5c-3 9-19 9-19-3zm5-2h9c-1-5-8-5-9 0z" fill="#4db5f0"/><path d="M4 24C-1 17 13 1 24 2c2 2 0 5-1 6 1-6-6-4-11 0C6 12 2 19 4 24z" fill="#f3c63a"/>`],
      ["文件资源管理器", "run", svg`<path d="M2 4h8l2 2h12v16H2z" fill="#f6d978"/><path d="M2 9h22v13H2z" fill="#fce79c"/><path d="M7 22v-8h12v8h-4v-4h-4v4z" fill="#38a8e8"/>`],
      ["记事", "run", svg`<rect x="1" y="1" width="24" height="24" rx="3" fill="#f09a1c"/><path d="M4 7l14-3 3 17-14 2z" fill="#fff4d8"/><path d="M7 11l8-2M8 14l7-1M8 18l6-1" stroke="#a87830" stroke-width="1.400"/><path d="M12 17L22 3l3 2-10 13z" fill="#b03a1c"/>`],
      ["广联达BIM钢筋算量软件", "act", svg`<rect x="1" y="1" width="24" height="24" rx="4" fill="#1290f0"/><path d="M13 5v13c0 2-5 2-6-1M13 5c3 0 4 3 2 4M6 13h14c2 0 2 4-1 5M6 13c-1-2 1-3 2-3" fill="none" stroke="#fff" stroke-width="2"/>`],
      ["广联达云", "run", svg`<path d="M25 4C12-2 1 6 2 15c1 6 6 9 11 9 7 0 11-5 10-10-1-4-6-6-9-3-2 3 0 5 3 4-1 3-7 3-8-2 0-6 7-6 12-5 2-1 4-2 4-4z" fill="#1ba0f0"/>`],
      ["360浏览器", "run", svg`<circle cx="13" cy="13" r="11" fill="#5cc83c"/><path d="M6 13c0-4 3-7 7-7s7 3 7 8h-10c0 3 5 4 7 1h3c-2 7-14 7-14-2zm4-1h6c0-4-6-4-6 0z" fill="#fff"/><path d="M4 23C2 20 4 9 22 3" fill="none" stroke="#d6f3a0" stroke-width="1.500"/>`],
    ];
    return html`
      <button class="start" aria-label="开始"><svg width="16" height="16" viewBox="0 0 16 16"><path d="M0 2.300l6.500-1v6.200H0zM7.500 1.200L16 0v7.500H7.500zM0 8.500h6.500v6.200l-6.500-1zM7.500 8.500H16V16l-8.500-1.200z" fill="#fff"/></svg></button>
      <label class="search"><svg width="24" height="24" viewBox="0 0 24 24"><circle cx="12" cy="12" r="9.500" fill="none" stroke="#f2f2f2" stroke-width="2.600"/></svg>
        <input type="text" placeholder="在这里输入你要搜索的内容" aria-label="搜索">
        <svg width="14" height="18" viewBox="0 0 14 18"><path d="M4.500 1.500h5v10h-5zM1.500 8v6h11V8M7 14v3M4 16.500h6" fill="none" stroke="#a8a8a8" stroke-width="1.200"/></svg></label>
      <div class="apps">${apps.map(([n, c, g]) => html`<button class="app ${c}" aria-label=${n}><svg viewBox="0 0 26 26">${g}</svg></button>`)}</div>
      <div class="tray"><span>链接</span>
        <svg width="28" height="20" viewBox="0 0 28 20"><path d="M6 9c5-5 13-5 18 0M9 12.500c4-3.500 8-3.500 12 0" fill="none" stroke="#5fd000" stroke-width="2.800"/><circle cx="15" cy="16.500" r="2" fill="#5fd000"/></svg>
        <svg width="16" height="12" viewBox="0 0 16 12"><path d="M2 9l6-6 6 6" fill="none" stroke="#fff" stroke-width="1.300"/></svg>
        <svg width="17" height="14" viewBox="0 0 17 14"><path d="M5 4.500h10v7H4.500V9M15 7h1.500v2.500" fill="none" stroke="#fff" stroke-width="1.300"/><path d="M7 6.500h6v3H7z" fill="#fff"/><path d="M1 2v3h4V2M3 5v5" stroke="#fff" stroke-width="1.200" fill="none"/></svg>
        <svg width="14" height="14" viewBox="0 0 14 14"><path d="M1 12C1 5 6 1 13 1M4 13c0-5 4-8 9-8M7.500 13c0-3 2-5 5.500-5" fill="none" stroke="#ccc" stroke-width="1.500"/><circle cx="11.500" cy="12" r="1.500" fill="#fff"/></svg>
        <svg width="17" height="14" viewBox="0 0 17 14"><path d="M1 5h3l3-4v12L4 9H1zM9 4c2 2 2 4 0 6M11.500 2.500c3 3 3 6 0 9M14 1c3 4 3 8 0 12" fill="none" stroke="#ddd" stroke-width="1.200"/></svg>
        <svg width="24" height="14" viewBox="0 0 24 14"><path d="M.7.7h22v12H.7z" fill="none" stroke="#fff" stroke-width="1.300"/><path d="M3 4h17M3 6.700h17" stroke="#fff" stroke-width="1.200" stroke-dasharray="1.500 1"/><path d="M6 10h12" stroke="#fff"/></svg>
        <span>中</span>
        <svg width="30" height="18" viewBox="0 0 30 18"><path d="M7 3l13-2 2 13-13 3z" fill="#f0481c"/><path d="M18.500 5c-3-1.500-7-.5-6.500 1.500s6 1 6 3.500-4.500 2.500-7 1.500" fill="none" stroke="#fff" stroke-width="2"/></svg>
        <div class="clock"><div>13:46</div><div>2018/6/12</div></div>
        <button class="note" aria-label="通知"><svg width="17" height="16" viewBox="0 0 17 16"><path d="M.7.7h15.500v11h-4v3.500L8.700 11.700h-8z" fill="none" stroke="#fff" stroke-width="1.300"/></svg></button>
      </div>`;
  }
}

@customElement("app-root")
class AppRoot extends LitElement {
  static styles = [shared, css`
    :host { position: relative; display: flex; flex-direction: column; height: 100vh; overflow: hidden; background: #f0f0f0; color: #111; font: 12px/16px "Noto Sans", "Noto Sans CJK SC", sans-serif; }
    .title { height: 24px; background: #fff; display: flex; align-items: center; padding: 0 14px 2px 2px; gap: 5px; color: #999; flex: none; }
    .title h1 { font: 400 13px/16px Roboto, "Noto Sans CJK SC", sans-serif; margin: 0; flex: 1; white-space: nowrap; }
    .wins { display: flex; gap: 34px; }
    .wins button { display: grid; }
    .row { display: flex; align-items: center; flex: none; }
    .menus { height: 28px; padding-right: 3px; gap: 4px; }
    nav { display: flex; gap: 10px; padding: 0 4px 0 7px; }
    nav button { white-space: nowrap; }
    .band { display: flex; align-items: center; height: 26px; border-radius: 4px; background: linear-gradient(#fdfdfd, #ebebeb); }
    .grow { flex: 1; min-width: 0; }
    .tip { padding-left: 18px; gap: 4px; overflow: hidden; white-space: nowrap; }
    .tip a { color: #4a2a10; text-decoration: none; margin-left: auto; padding-right: 37px; }
    .acct { width: 236px; padding-left: 3px; gap: 5px; flex: none; }
    .acct .gap { display: flex; margin-right: 3px; }
    .acct .bell { margin-left: 4px; }
    .more { align-self: flex-start; margin-left: auto; padding-right: 4px; font-weight: 700; font-size: 13px; line-height: 14px; }
    .bars { height: 32px; padding: 0 3px 0 1px; gap: 2px; }
    .bars .band { height: 29px; }
    .b1 { width: 151px; } .b2 { width: 548px; margin-right: 2px; }
    .main { flex: 1; min-height: 0; display: flex; }
    module-nav { width: 254px; flex: none; }
    .work { flex: 1; min-width: 0; display: flex; flex-direction: column; padding-left: 5px; }
    .r1 { height: 26px; } .r2, .r3 { height: 28px; }
    .r1 .band, .r2 .band, .r3 .band { height: 26px; }
    .edit { padding-right: 5px; }
    .grip { width: 8px; height: 16px; background: radial-gradient(circle, #a8a8a8 1px, transparent 2px) center / 4px 4px repeat-y; flex: none; }
    .combo { display: grid; grid-template-columns: 1fr 12px; align-items: center; width: 70px; height: 24px; background: #fff; margin-right: 2px; flex: none; }
    .combo select { grid-area: 1 / 1 / 2 / 3; appearance: none; padding-left: 3px; width: 100%; height: 24px; outline: none; }
    .combo .arrow { grid-area: 1 / 2; pointer-events: none; }
    .first { width: 60px; }
    .view { grid-template-columns: 20px 1fr 12px; width: 62px; padding-left: 1px; margin-right: 1px; }
    .view select { grid-area: 1 / 2 / 2 / 4; padding-left: 0; }
    .view .arrow { grid-area: 1 / 3; }
    .view .ic { grid-area: 1 / 1; margin-left: 1px; }
    .axis { margin-left: auto; margin-right: 44px; }
    .axis > button { padding-right: 4px; }
    .stub { margin-left: auto; margin-right: 3px; width: 30px; }
    plan-canvas { flex: 1; min-height: 0; margin-right: 1px; }
    .snap { height: 31px; }
    .snap .band { height: 28px; }
    .s1 { margin-left: 211px; } .s2 { margin-left: 3px; color: #777; padding-right: 4px; }
    .s2 .combo, .s2 .rot { color: #111; }
    .sep { width: 1px; height: 16px; background: #c4c4c4; margin: 0 1px; }
    .num-in { display: flex; align-items: center; width: 58px; height: 23px; border: 1px solid #7a7a7a; margin: 0 2px; padding-right: 3px; }
    .num-in.wide { width: 68px; margin-left: 4px; }
    .num-in input { min-width: 0; flex: 1; text-align: right; padding-right: 10px; outline: none; width: 20px; }
    .s2 label { padding: 0 1px; }
    .s2 .yl { padding-left: 4px; }
    .ck { appearance: none; width: 11px; height: 11px; border: 1px solid #999; margin: 0 8px 0 3px; }
    .status { display: grid; grid-template-columns: 148px 78px 98px 48px 1fr 70px; gap: 2px; height: 22px; padding-top: 2px; background: #fff; flex: none; }
    .status span.cell { border: 1px solid #d8d8d8; background: linear-gradient(#fff, #f0f0f0); padding-left: 1px; line-height: 18px; white-space: nowrap; overflow: hidden; }
    property-editor { position: absolute; left: 646px; top: 108px; width: 331px; }
    .ring { position: absolute; left: 614px; top: 417px; width: 332px; height: 79px; pointer-events: none; }
    .wifi { position: absolute; left: 857px; top: 24px; width: 120px; height: 47px; background: #fff; border-radius: 24px; border-top-right-radius: 0; box-shadow: 0 2px 8px rgba(0, 0, 0, .4); display: flex; align-items: center; gap: 6px; padding-left: 5px; }
    .wifi span { padding-top: 16px; display: flex; gap: 5px; color: #555; }
    .ime { position: absolute; left: 768px; top: 12px; width: 208px; height: 30px; display: flex; align-items: center; gap: 7px; padding-left: 34px; color: #1f6fc8; }
    .ime::before { content: ""; position: absolute; inset: 4px 0 2px 4px; background: #fff; border: 1px solid #a9c3dd; }
    .ime > * { position: relative; }
    .ime .logo { position: absolute; left: 0; top: 0; }
    .ime b { font-size: 15px; }
    .badge { position: absolute; left: 1131px; top: -29px; width: 48px; height: 48px; border-radius: 50%; background: #3fc65c; border: 2px solid #e4e4e4; box-shadow: inset 0 0 0 1px #1d8a50, 0 1px 5px rgba(0, 0, 0, .5); color: #fff; font-weight: 700; padding-top: 26px; text-align: center; }
  `];
  private combo(text: string, cls = "", label = text) {
    return html`<span class="combo ${cls}">${cls === "view" ? icon("plane") : nothing}<select aria-label=${label}><option>${text}</option></select>${arrow}</span>`;
  }
  private spin(id: string, value: string, cls = "") {
    return html`<span class="num-in ${cls}"><input id=${id} type="text" .value=${value}>
      <svg width="7" height="15" viewBox="0 0 7 15" aria-hidden="true"><path d="M0 4l3.500-4L7 4zM0 11h7l-3.500 4z" fill="#555"/></svg></span>`;
  }
  render() {
    return html`
      <div class="title"><svg class="ic" viewBox="0 0 16 16"><rect width="16" height="16" rx="3" fill="#1290e8"/><path d="M8 3v8c0 2-3 2-4 0M8 3c2 0 3 2 1 3M3.500 8H12c2 0 1 3-1 3M3.500 8c-1-1 0-2 1-2" fill="none" stroke="#fff" stroke-width="1.300"/></svg>
        <h1>广联达BIM钢筋算量软件 GGJ2013 - [C:\\Users\\Administrator.PC-20141127NRHM\\Desktop\\白龙村-2018-02-02-19-24-35(2666版).GGJ12]</h1>
        <div class="wins">
          <button aria-label="最小化"><svg width="11" height="11" viewBox="0 0 11 11"><path d="M0 5.500h11" stroke="#888"/></svg></button>
          <button aria-label="还原"><svg width="11" height="11" viewBox="0 0 11 11"><path d="M.5 2.500h8v8h-8zM2.500 2.500v-2h8v8h-2" fill="none" stroke="#888"/></svg></button>
          <button aria-label="关闭"><svg width="11" height="11" viewBox="0 0 11 11"><path d="M.5.5l10 10M10.500.5l-10 10" stroke="#888"/></svg></button>
        </div></div>
      <div class="row menus"><nav>${MENUS.map((m) => html`<button>${m}</button>`)}</nav>
        <div class="band grow tip">${icon("neu")}<button>新建变更</button><a href="#">如何查看并修改属性?</a></div>
        <div class="band acct">${icon("user")}<span>13907298339</span><span class="gap">${arrow}</span><span>造价豆:0</span><span class="bell">${icon("bell")}</span>${more}</div></div>
      <div class="row bars">
        <div class="band b1"><tool-items .items=${T_FILE}></tool-items>${more}</div>
        <div class="band b2"><tool-items .items=${T_MAIN}></tool-items>${more}</div>
        <div class="band grow">${this.combo("二维", "view")}<tool-items .items=${T_VIEW}></tool-items>${more}</div></div>
      <div class="main">
        <module-nav></module-nav>
        <div class="work">
          <div class="row r1"><div class="band edit"><span class="grip"></span><tool-items .items=${T_EDIT}></tool-items></div></div>
          <div class="row r2"><div class="band"><span class="grip"></span>
              ${this.combo("第7层", "first")}${this.combo("门窗洞")}${this.combo("过梁")}${this.combo("GL-1")}${this.combo("分层洞1")}<tool-items .items=${[SEP, { i: "prop", on: true }]}></tool-items></div>
            <div class="band axis"><button>平行</button><tool-items .items=${T_AXIS}></tool-items></div></div>
          <div class="row r3"><div class="band"><span class="grip"></span><tool-items .items=${T_DRAW}></tool-items></div>
            <div class="band stub"><span class="grip"></span></div></div>
          <plan-canvas></plan-canvas>
          <div class="row snap"><div class="band s1"><span class="grip"></span><tool-items .items=${T_SNAP}></tool-items></div>
            <div class="band s2"><span class="grip"></span>${this.combo("不偏移", "first")}<span class="sep"></span>
              <label for="dx">X=</label>${this.spin("dx", "0")}<span>mm</span><label class="yl" for="dy">Y=</label>${this.spin("dy", "0")}<span>mm</span>
              <span class="sep"></span><input class="ck" id="rot" type="checkbox"><label class="rot" for="rot">旋转</label>${this.spin("ang", "0.000", "wide")}<span>°</span></div></div>
        </div>
      </div>
      <div class="status">${["X=41445 Y=1707", "层高:2.8m", "底标高:20.35m", "0", "按鼠标左键指定第一个角点，或拾取构件图元", "425.5 FPS"].map((s) => html`<span class="cell">${half(s)}</span>`)}</div>
      <task-bar></task-bar>
      <property-editor></property-editor>
      <svg class="ring" viewBox="0 0 332 79" aria-hidden="true"><ellipse cx="166" cy="39.500" rx="162.500" ry="35.500" fill="none" stroke="#f00" stroke-width="7"/></svg>
      <div class="wifi"><svg width="39" height="39" viewBox="0 0 39 39"><circle cx="19.500" cy="19.500" r="19" fill="#28c76c"/><path d="M8 18c7-7 16-7 23 0M12 23c5-5 10-5 15 0" fill="none" stroke="#fff" stroke-width="3.500"/><circle cx="19.500" cy="28" r="2.500" fill="#fff"/></svg>
        <span><svg width="9" height="14" viewBox="0 0 9 14"><path d="M1 3.500h7v9H1zM2 1v2" fill="none" stroke="#28c76c" stroke-width="1.600"/><path d="M1 8h7v4H1z" fill="#28c76c"/></svg>0</span></div>
      <div class="ime"><svg class="logo" width="30" height="30" viewBox="0 0 30 30"><path d="M2 7l21-5 3 20-21 5z" fill="#f0501e"/><path d="M21 9c-4-3-13-1-13 2s13 2 13 6-9 5-14 2" fill="none" stroke="#fff" stroke-width="3.500"/></svg>
        <b>英</b>
        <svg width="14" height="14" viewBox="0 0 14 14"><circle cx="4" cy="5" r="2" fill="#1f6fc8"/><path d="M10 8c2 0 2 3-1 4" fill="none" stroke="#1f6fc8" stroke-width="2"/></svg>
        <svg width="16" height="16" viewBox="0 0 16 16"><circle cx="8" cy="8" r="6.800" fill="none" stroke="#1f6fc8" stroke-width="2"/><path d="M4.500 9c1 3 6 3 7 0" fill="none" stroke="#1f6fc8" stroke-width="1.300"/><path d="M5 5h1.500v2H5zM9.500 5H11v2H9.500z" fill="#1f6fc8"/></svg>
        <svg width="14" height="16" viewBox="0 0 14 16"><rect x="4" width="6" height="10" rx="3" fill="#1f6fc8"/><path d="M1.500 7c0 6 11 6 11 0M7 12v3M3 15h8" fill="none" stroke="#1f6fc8" stroke-width="1.500"/></svg>
        <svg width="16" height="12" viewBox="0 0 16 12"><rect width="16" height="12" rx="1" fill="#1f6fc8"/><path d="M2 3.500h12M2 6h12" stroke="#fff" stroke-width="1.500" stroke-dasharray="2 1"/><path d="M4 9h8" stroke="#fff" stroke-width="1.500"/></svg>
        <svg width="17" height="16" viewBox="0 0 17 16"><circle cx="6" cy="4" r="3.500" fill="#a8bad4"/><path d="M0 14c0-7 12-7 12 0z" fill="#a8bad4"/><path d="M5 9.500h4v2.500H5.500v2H9M12 9v3h4M16 9v5" fill="none" stroke="#fff" stroke-width="3"/><path d="M5 9.500h4v2.500H5.500v2.500H9M12 9v3h4M15.500 9v6" fill="none" stroke="#a8bad4" stroke-width="1.300"/></svg>
        <svg width="14" height="14" viewBox="0 0 14 14"><path d="M4 0c1 2 5 2 6 0l4 3-2 3-1-1v8H3V5L2 6 0 3z" fill="#1f6fc8"/></svg>
        <svg width="15" height="15" viewBox="0 0 15 15"><path d="M1 12l6-6c-1-3 2-6 5-5l-3 3 2 2 3-3c1 3-2 6-5 5l-6 6z" fill="#1f6fc8"/></svg></div>
      <div class="badge">72</div>`;
  }
}
